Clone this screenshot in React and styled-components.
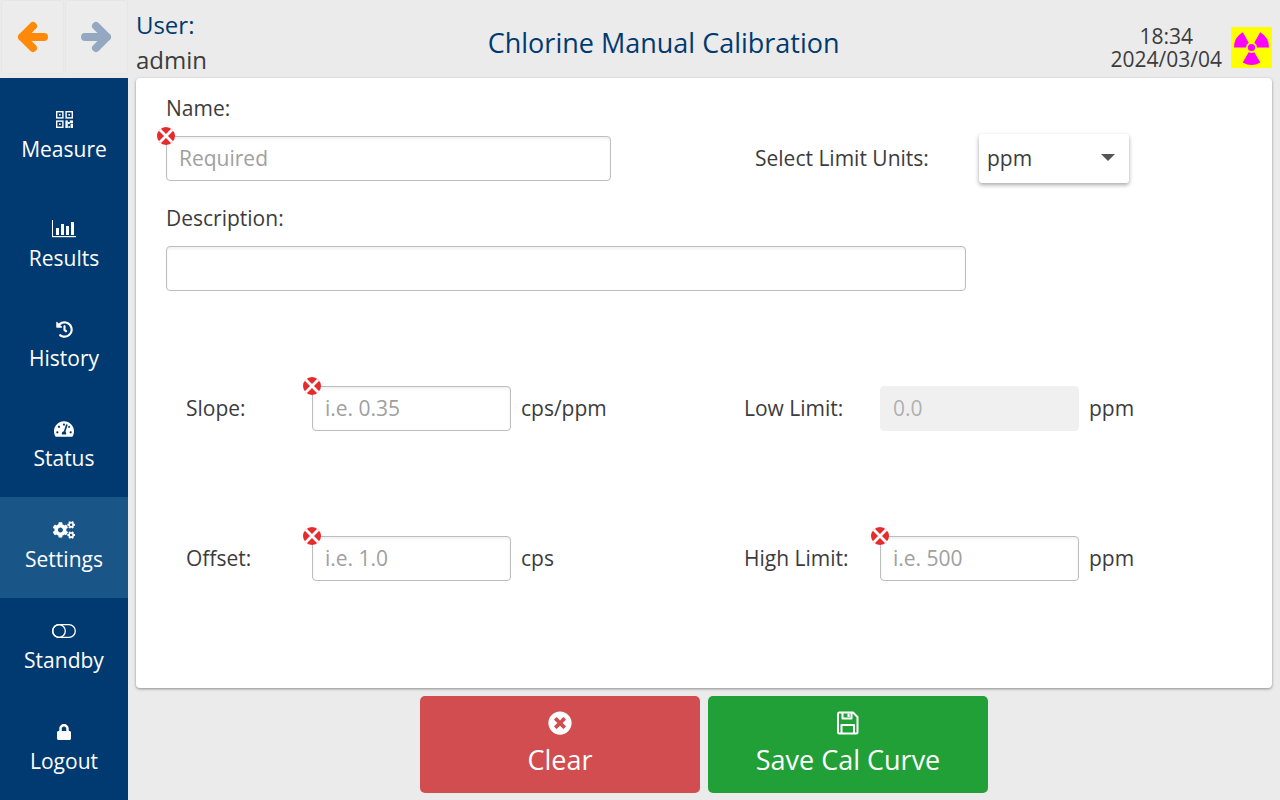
import React from "react";
import styled, { createGlobalStyle } from "styled-components";
import { FaHistory, FaTachometerAlt, FaCogs, FaLock, FaTimesCircle } from "react-icons/fa";

const GlobalStyle = createGlobalStyle`
    html, body {
        margin: 0;
        padding: 0;
        background: #ebebeb;
    }
    * {
        box-sizing: border-box;
    }
    body {
        font-family: "Open Sans", "Liberation Sans", sans-serif;
    }
`;

function ArrowIcon({ dir, color }) {
    return (
        <svg width="36" height="36" viewBox="0 0 36 36" fill="none" stroke={color} strokeWidth="8" strokeLinecap="round" strokeLinejoin="round">
            {dir === "left"
                ? <path d="M30 18 H8 M19 7 L8 18 L19 29" />
                : <path d="M7 18 H29 M18 7 L29 18 L18 29" />}
        </svg>
    );
}

function QrIcon() {
    return (
        <svg width="17" height="17" viewBox="0 0 17 17" fill="none" stroke="#fff" strokeWidth="1.4">
            <rect x="0.7" y="0.7" width="6.2" height="6.2" />
            <rect x="10.1" y="0.7" width="6.2" height="6.2" />
            <rect x="0.7" y="10.1" width="6.2" height="6.2" />
            <g fill="#fff" stroke="none">
                <rect x="3" y="3" width="1.6" height="1.6" />
                <rect x="12.4" y="3" width="1.6" height="1.6" />
                <rect x="3" y="12.4" width="1.6" height="1.6" />
                <rect x="9.4" y="9.4" width="2.4" height="7.6" />
                <rect x="11.8" y="11" width="2" height="2" />
                <rect x="13.8" y="9.4" width="3.2" height="2.6" />
                <rect x="14.6" y="12.6" width="2.4" height="4.4" />
                <rect x="12.4" y="15" width="1.4" height="2" />
            </g>
        </svg>
    );
}

function ResultsIcon() {
    return (
        <svg width="24" height="18" viewBox="0 0 24 18" fill="#fff">
            <rect x="0" y="0" width="1" height="17" />
            <rect x="0" y="16" width="24" height="1.2" />
            <rect x="4" y="8" width="3" height="7" />
            <rect x="9" y="4" width="3" height="11" />
            <rect x="14" y="6" width="3" height="9" />
            <rect x="19" y="2" width="3" height="13" />
        </svg>
    );
}

function StandbyIcon() {
    return (
        <svg width="24" height="14" viewBox="0 0 24 14" fill="none" stroke="#fff" strokeWidth="1.3">
            <rect x="0.7" y="0.7" width="22.6" height="12.6" rx="6.3" />
            <circle cx="7" cy="7" r="6.3" />
        </svg>
    );
}

function SaveIcon() {
    return (
        <svg width="22" height="24" viewBox="0 0 22 24" fill="none" stroke="#fff" strokeWidth="2" strokeLinejoin="round">
            <path d="M2 1.5 H16 L20.5 6 V21 Q20.5 22.5 19 22.5 H2.5 Q1 22.5 1 21 V3 Q1 1.5 2 1.5 Z" />
            <path d="M5.5 1.5 V7.5 H14.5 V1.5" />
            <path d="M4.5 22.5 V14 H17 V22.5" />
            <rect x="10.5" y="2.5" width="2.2" height="3.5" fill="#fff" stroke="none" />
        </svg>
    );
}

function ErrorMark() {
    return (
        <Mark width="18" height="18" viewBox="0 0 18 18">
            <circle cx="9" cy="9" r="9" fill="#e52b2b" />
            <path d="M2.8 2.8 L15.2 15.2 M15.2 2.8 L2.8 15.2" stroke="#fff" strokeWidth="2.8" />
        </Mark>
    );
}

function RadiationIcon() {
    return (
        <RadiationSvg width="41" height="41" viewBox="0 0 41 41">
            <rect width="41" height="41" fill="#ffff00" />
            <circle cx="20.5" cy="20.5" r="3.6" fill="#ff00ff" />
            <path d="M3 20.5 A17.5 17.5 0 0 1 11.8 5.3 L17.7 15.8 A5.5 5.5 0 0 0 15 20.5 Z" fill="#ff00ff" />
            <path d="M38 20.5 A17.5 17.5 0 0 0 29.2 5.3 L23.3 15.8 A5.5 5.5 0 0 1 26 20.5 Z" fill="#ff00ff" />
            <path d="M11.7 35.5 A17.5 17.5 0 0 0 29.3 35.5 L23.3 25.2 A5.5 5.5 0 0 1 17.7 25.2 Z" fill="#ff00ff" />
        </RadiationSvg>
    );
}

const navItems = [
    { label: "Measure", icon: <QrIcon />, height: 119 },
    { label: "Results", icon: <ResultsIcon />, height: 100 },
    { label: "History", icon: <FaHistory size={17} />, height: 100 },
    { label: "Status", icon: <FaTachometerAlt size={20} />, height: 100 },
    { label: "Settings", icon: <FaCogs size={22} />, height: 101, active: true },
    { label: "Standby", icon: <StandbyIcon />, height: 101 },
    { label: "Logout", icon: <FaLock size={16} />, height: 101 },
];

export default function App() {
    return (
        <>
            <GlobalStyle />
            <Page>
                <Header>
                    <NavButtons>
                        <NavButton><ArrowIcon dir="left" color="#ff8a0a" /></NavButton>
                        <NavButton><ArrowIcon dir="right" color="#94a9c1" /></NavButton>
                    </NavButtons>
                    <UserBox>
                        <UserLabel>User:</UserLabel>
                        <UserName>admin</UserName>
                    </UserBox>
                    <Title>Chlorine Manual Calibration</Title>
                    <Clock>
                        <span>18:34</span>
                        <span>2024/03/04</span>
                    </Clock>
                    <RadiationIcon />
                </Header>
                <Body>
                    <Sidebar>
                        {navItems.map((item) => (
                            <SideItem key={item.label} $height={item.height} $active={item.active}>
                                <SideIcon>{item.icon}</SideIcon>
                                <SideLabel>{item.label}</SideLabel>
                            </SideItem>
                        ))}
                    </Sidebar>
                    <Main>
                        <Card>
                            <FieldLabel>Name:</FieldLabel>
                            <TopRow>
                                <InputWrap>
                                    <ErrorMark />
                                    <TextInput $width={445} placeholder="Required" />
                                </InputWrap>
                                <UnitsLabel>Select Limit Units:</UnitsLabel>
                                <SelectBox>
                                    <span>ppm</span>
                                    <Caret />
                                </SelectBox>
                            </TopRow>
                            <DescLabel>Description:</DescLabel>
                            <TextInput $width={800} />
                            <LimitRow $top={95}>
                                <LimitCell>
                                    <RowLabel>Slope:</RowLabel>
                                    <InputWrap>
                                        <ErrorMark />
                                        <TextInput $width={199} placeholder="i.e. 0.35" />
                                    </InputWrap>
                                    <Unit>cps/ppm</Unit>
                                </LimitCell>
                                <LimitCell>
                                    <RowLabel $right>Low Limit:</RowLabel>
                                    <TextInput $width={199} placeholder="0.0" disabled />
                                    <Unit>ppm</Unit>
                                </LimitCell>
                            </LimitRow>
                            <LimitRow $top={105}>
                                <LimitCell>
                                    <RowLabel>Offset:</RowLabel>
                                    <InputWrap>
                                        <ErrorMark />
                                        <TextInput $width={199} placeholder="i.e. 1.0" />
                                    </InputWrap>
                                    <Unit>cps</Unit>
                                </LimitCell>
                                <LimitCell>
                                    <RowLabel $right>High Limit:</RowLabel>
                                    <InputWrap>
                                        <ErrorMark />
                                        <TextInput $width={199} placeholder="i.e. 500" />
                                    </InputWrap>
                                    <Unit>ppm</Unit>
                                </LimitCell>
                            </LimitRow>
                        </Card>
                        <Actions>
                            <ActionButton $color="#d14d4f">
                                <FaTimesCircle size={24} />
                                <span>Clear</span>
                            </ActionButton>
                            <ActionButton $color="#21a038">
                                <SaveIcon />
                                <span>Save Cal Curve</span>
                            </ActionButton>
                        </Actions>
                    </Main>
                </Body>
            </Page>
        </>
    );
}

const Page = styled.div`
    width: 1280px;
    height: 800px;
    overflow: hidden;
    display: flex;
    flex-direction: column;
    background: #ebebeb;
`;

const Header = styled.header`
    height: 78px;
    display: flex;
    align-items: center;
    padding-right: 8px;
`;

const NavButtons = styled.div`
    width: 128px;
    height: 78px;
    display: flex;
    gap: 1px;
    padding: 0 0 4px 1px;
`;

const NavButton = styled.button`
    flex: 1;
    display: flex;
    align-items: center;
    justify-content: center;
    padding: 0;
    background: #ececec;
    border: 1px solid #e6e6e6;
    border-radius: 3px;
`;

const UserBox = styled.div`
    width: 320px;
    height: 78px;
    padding: 7px 0 0 8px;
    display: flex;
    flex-direction: column;
    font-size: 24px;
    line-height: 35px;
`;

const UserLabel = styled.span`
    color: #003a70;
`;

const UserName = styled.span`
    color: #3c3c3c;
`;

const Title = styled.h1`
    margin: 0;
    width: 432px;
    text-align: center;
    font-size: 27px;
    font-weight: 400;
    color: #003a70;
    padding-top: 7px;
`;

const Clock = styled.div`
    flex: 1;
    display: flex;
    flex-direction: column;
    align-items: center;
    padding-left: 231px;
    margin-right: 9px;
    padding-top: 18px;
    font-size: 21px;
    line-height: 23px;
    color: #3c3c3c;
    white-space: nowrap;
`;

const RadiationSvg = styled.svg`
    margin-top: 17px;
`;

const Body = styled.div`
    flex: 1;
    display: flex;
    min-height: 0;
`;

const Sidebar = styled.nav`
    width: 128px;
    background: #003a70;
    display: flex;
    flex-direction: column;
`;

const SideItem = styled.div`
    height: ${(props) => props.$height}px;
    display: flex;
    flex-direction: column;
    align-items: center;
    justify-content: center;
    gap: 1px;
    padding-bottom: 3px;
    color: #fff;
    background: ${(props) => (props.$active ? "#1a5588" : "transparent")};
`;

const SideIcon = styled.div`
    height: 24px;
    display: flex;
    align-items: center;
    justify-content: center;
`;

const SideLabel = styled.span`
    font-size: 21px;
    line-height: 32px;
`;

const Main = styled.main`
    flex: 1;
    padding: 0 8px;
    display: flex;
    flex-direction: column;
`;

const Card = styled.section`
    height: 610px;
    background: #fff;
    border-radius: 4px;
    box-shadow: 0 1px 3px rgba(0, 0, 0, 0.4);
    padding: 16px 0 0 30px;
`;

const FieldLabel = styled.div`
    font-size: 21px;
    line-height: 28px;
    color: #3c3c3c;
    margin-bottom: 14px;
`;

const DescLabel = styled(FieldLabel)`
    margin-top: 23px;
`;

const TopRow = styled.div`
    height: 45px;
    display: flex;
    align-items: center;
`;

const UnitsLabel = styled.span`
    width: 224px;
    margin-left: 144px;
    padding-bottom: 2px;
    font-size: 21px;
    color: #3c3c3c;
`;

const SelectBox = styled.div`
    width: 150px;
    height: 49px;
    padding: 0 14px 2px 8px;
    display: flex;
    align-items: center;
    justify-content: space-between;
    font-size: 21px;
    color: #3c3c3c;
    background: #fff;
    border-radius: 3px;
    box-shadow: 0 2px 4px rgba(0, 0, 0, 0.35);
`;

const Caret = styled.div`
    width: 0;
    height: 0;
    border-left: 7px solid transparent;
    border-right: 7px solid transparent;
    border-top: 7px solid #555;
`;

const InputWrap = styled.div`
    position: relative;
    display: flex;
`;

const Mark = styled.svg`
    position: absolute;
    left: -9px;
    top: -9px;
`;

const TextInput = styled.input`
    display: block;
    width: ${(props) => props.$width}px;
    height: 45px;
    padding: 0 12px 2px;
    font-family: "Open Sans", "Liberation Sans", sans-serif;
    font-size: 21px;
    color: #3c3c3c;
    background: #fff;
    border: 1px solid #bdbdbd;
    border-radius: 4px;
    box-shadow: inset 0 2px 3px rgba(0, 0, 0, 0.06);
    outline: none;

    &::placeholder {
        color: #a0a0a0;
        opacity: 1;
    }

    &:disabled {
        background: #f0f0f0;
        border-color: #f0f0f0;
        box-shadow: none;
    }

    &:disabled::placeholder {
        color: #b0b0b0;
    }
`;

const LimitRow = styled.div`
    margin-top: ${(props) => props.$top}px;
    padding-left: 20px;
    display: grid;
    grid-template-columns: 558px 1fr;
`;

const LimitCell = styled.div`
    display: flex;
    align-items: center;
`;

const RowLabel = styled.span`
    width: ${(props) => (props.$right ? 136 : 126)}px;
    padding-bottom: 2px;
    font-size: 21px;
    color: #3c3c3c;
`;

const Unit = styled.span`
    margin-left: 10px;
    padding-bottom: 2px;
    font-size: 21px;
    color: #3c3c3c;
`;

const Actions = styled.div`
    margin-top: 8px;
    display: flex;
    justify-content: center;
    gap: 8px;
`;

const ActionButton = styled.button`
    width: 280px;
    height: 97px;
    display: flex;
    flex-direction: column;
    align-items: center;
    justify-content: center;
    gap: 6px;
    padding: 0;
    border: none;
    border-radius: 5px;
    color: #fff;
    background: ${(props) => props.$color};
    font-family: "Open Sans", "Liberation Sans", sans-serif;
    font-size: 27px;
    line-height: 38px;
`;
